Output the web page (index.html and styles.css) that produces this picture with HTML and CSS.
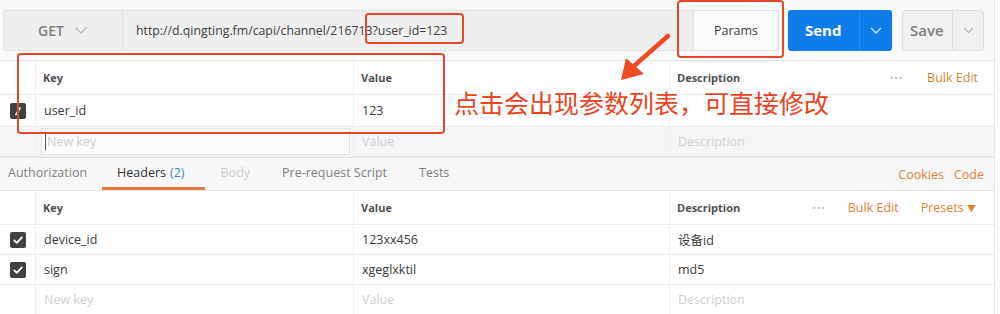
FILE: index.html
```html
<!DOCTYPE html>
<html lang="zh">
<head>
  <meta charset="UTF-8">
  <title>Params</title>
  <link rel="stylesheet" href="styles.css">
</head>
<body>

<div class="page">
  <div class="request">
    <div class="url-bar">
      <div class="method">GET
        <svg class="chev" width="14" height="8" viewBox="0 0 14 8"><path d="M1 1 L7 7 L13 1" fill="none" stroke="#b8b8b8" stroke-width="1.3"/></svg>
      </div>
      <div class="url">http://d.qingting.fm/capi/channel/216713?user_id=123</div>
      <div class="params-btn">Params</div>
    </div>
    <div class="send">
      <span class="send-label">Send</span>
      <span class="send-drop"><svg width="12" height="7" viewBox="0 0 12 7"><path d="M1 1 L6 6 L11 1" fill="none" stroke="#cfe4fb" stroke-width="1.3"/></svg></span>
    </div>
    <div class="save">
      <span class="save-label">Save</span>
      <span class="save-drop"><svg width="11" height="7" viewBox="0 0 11 7"><path d="M1 1 L5.5 5.5 L10 1" fill="none" stroke="#b0b0b0" stroke-width="1.1"/></svg></span>
    </div>
  </div>

  <div class="kv-table params">
    <div class="kv-row kv-head">
      <div class="cell check"></div>
      <div class="cell">Key</div>
      <div class="cell">Value</div>
      <div class="cell desc">Description
        <span class="actions"><span class="dots">•••</span><span class="link">Bulk Edit</span></span>
      </div>
    </div>
    <div class="kv-row">
      <div class="cell check"><span class="box"><svg width="16" height="16" viewBox="0 0 16 16"><path d="M6 11.5 L10 5" stroke="#fff" stroke-width="1.8" stroke-linecap="round"/></svg></span></div>
      <div class="cell">user_id</div>
      <div class="cell">123</div>
      <div class="cell"></div>
    </div>
    <div class="kv-row new-row">
      <div class="cell check"></div>
      <div class="cell"><div class="key-input"><span class="caret"></span>New key</div></div>
      <div class="cell muted">Value</div>
      <div class="cell muted">Description</div>
    </div>
  </div>

  <div class="tabs">
    <div class="tab first">Authorization</div>
    <div class="tab active">Headers <span class="count">(2)</span></div>
    <div class="tab disabled">Body</div>
    <div class="tab">Pre-request Script</div>
    <div class="tab">Tests</div>
    <div class="tab-links"><span class="link">Cookies</span><span class="link">Code</span></div>
  </div>

  <div class="kv-table headers">
    <div class="kv-row kv-head">
      <div class="cell check"></div>
      <div class="cell">Key</div>
      <div class="cell">Value</div>
      <div class="cell desc">Description
        <span class="actions"><span class="dots">•••</span><span class="link">Bulk Edit</span><span class="link">Presets <span class="tri">▼</span></span></span>
      </div>
    </div>
    <div class="kv-row">
      <div class="cell check"><span class="box"><svg width="16" height="16" viewBox="0 0 16 16"><path d="M4.2 8.3 L6.8 10.8 L11.8 5.4" fill="none" stroke="#fff" stroke-width="1.7" stroke-linecap="round" stroke-linejoin="round"/></svg></span></div>
      <div class="cell">device_id</div>
      <div class="cell">123xx456</div>
      <div class="cell">设备id</div>
    </div>
    <div class="kv-row">
      <div class="cell check"><span class="box"><svg width="16" height="16" viewBox="0 0 16 16"><path d="M4.2 8.3 L6.8 10.8 L11.8 5.4" fill="none" stroke="#fff" stroke-width="1.7" stroke-linecap="round" stroke-linejoin="round"/></svg></span></div>
      <div class="cell">sign</div>
      <div class="cell">xgeglxktil</div>
      <div class="cell">md5</div>
    </div>
    <div class="kv-row">
      <div class="cell check"></div>
      <div class="cell muted">New key</div>
      <div class="cell muted">Value</div>
      <div class="cell muted">Description</div>
    </div>
  </div>

  <!-- annotations -->
  <div class="mark mark-query"></div>
  <div class="mark mark-params"></div>
  <div class="mark mark-table"></div>
  <div class="note">点击会出现参数列表，可直接修改</div>
  <svg class="arrow" width="70" height="60" viewBox="610 30 70 60">
    <path d="M668 36 L634 66" stroke="#ef4a24" stroke-width="4.5" stroke-linecap="round"/>
    <path d="M621 80 L626 58 L644 74 Z" fill="#ef4a24"/>
  </svg>
</div>

</body>
</html>
```

FILE: styles.css
```css
* {
  box-sizing: border-box;
}
body {
  margin: 0;
  font-family: "Open Sans", "Noto Sans CJK SC", sans-serif;
  font-size: 12.5px;
  color: #3a3a3a;
  background: #fff;
}

.page {
  position: relative;
  width: 995px;
  height: 314px;
  border-right: 1px solid #e4e4e4;
  overflow: hidden;
}

/* request bar */
.request {
  display: flex;
  align-items: center;
  height: 61px;
  padding: 0 10px 0 3px;
  background: #fafafa;
  border-bottom: 1px solid #e2e2e2;
}

.url-bar {
  display: flex;
  width: 776px;
  height: 41px;
  background: #efefef;
  border: 1px solid #e2e2e2;
  border-radius: 3px;
}

.method {
  display: flex;
  align-items: center;
  gap: 10px;
  width: 119px;
  padding-left: 34px;
  font-size: 14px;
  font-weight: 600;
  color: #808080;
  border-right: 1px solid #e2e2e2;
}

.url {
  flex: 1;
  display: flex;
  align-items: center;
  padding-left: 13px;
  font-size: 12.3px;
  color: #404040;
}

.params-btn {
  display: flex;
  align-items: center;
  justify-content: center;
  width: 86px;
  margin: -1px -1px -1px 0;
  background: #fbfbfb;
  border: 1px solid #e2e2e2;
  color: #404040;
}

.send {
  display: flex;
  width: 104px;
  height: 41px;
  margin-left: 9px;
  background: #0f7de9;
  border-radius: 3px;
  color: #fff;
}
.send-label {
  flex: 1;
  display: flex;
  align-items: center;
  padding-left: 17px;
  font-size: 15px;
  font-weight: 700;
}
.send-drop {
  display: flex;
  align-items: center;
  justify-content: center;
  width: 33px;
  border-left: 1px solid #2b8cee;
}

.save {
  display: flex;
  width: 82px;
  height: 41px;
  margin-left: 10px;
  background: #f0f0f0;
  border: 1px solid #e0e0e0;
  border-radius: 3px;
  color: #7d7d7d;
}
.save-label {
  flex: 1;
  display: flex;
  align-items: center;
  padding-left: 7px;
  font-size: 15px;
  font-weight: 600;
}
.save-drop {
  display: flex;
  align-items: center;
  justify-content: center;
  width: 31px;
  border-left: 1px solid #e0e0e0;
}

/* key / value tables */
.kv-row {
  display: grid;
  grid-template-columns: 35px 318px 316px 1fr;
  height: 32px;
  border-bottom: 1px solid #ececec;
}
.params .kv-head {
  height: 34px;
}
.params .new-row {
  height: 30px;
}
.headers .kv-row {
  height: 30px;
}
.headers .kv-head {
  height: 34px;
}

.cell {
  display: flex;
  align-items: center;
  padding-left: 8px;
  border-left: 1px solid #f1f1f1;
  white-space: nowrap;
}
.cell.check {
  justify-content: center;
  padding-left: 0;
  border-left: none;
}

.kv-head .cell {
  font-size: 11px;
  font-weight: 700;
  color: #505050;
  padding-left: 7px;
}
.kv-head .cell.desc {
  justify-content: space-between;
  padding-right: 16px;
}
.actions {
  display: flex;
  align-items: center;
  gap: 24px;
  font-size: 12.5px;
  font-weight: 400;
}
.dots {
  font-size: 9px;
  letter-spacing: 1px;
  color: #b5b5b5;
}
.headers .actions {
  gap: 22px;
  padding-right: 2px;
}
.tri {
  font-size: 9px;
}

.link {
  color: #e27f37;
}

.box {
  display: flex;
  width: 16px;
  height: 16px;
  background: #414141;
  border-radius: 2px;
}

.new-row {
  background: #f6f6f6;
}
.key-input {
  display: flex;
  align-items: center;
  width: 309px;
  height: 27px;
  margin-left: -3px;
  padding-left: 3px;
  background: #fcfcfc;
  border: 1px solid #e2e2e2;
}
.caret {
  width: 1px;
  height: 16px;
  margin-right: 1px;
  background: #555;
}
.muted,
.key-input {
  color: #cfcfcf;
}

/* tabs */
.tabs {
  display: flex;
  align-items: stretch;
  height: 34px;
  background: #f8f8f8;
  border-top: 1px solid #e4e4e4;
  border-bottom: 1px solid #e4e4e4;
}
.tab {
  display: flex;
  align-items: center;
  padding: 0 16px;
  color: #808080;
  border-bottom: 3px solid transparent;
}
.tab.first {
  padding-left: 8px;
  padding-right: 15px;
}
.tab.active {
  padding: 0 20px 0 15px;
  color: #333;
  border-bottom-color: #e8773a;
}
.tab.disabled {
  color: #cccccc;
}
.count {
  margin-left: 4px;
  color: #3a87c8;
}
.tab-links {
  display: flex;
  align-items: center;
  gap: 10px;
  margin-left: auto;
  padding: 1px 10px 0 0;
}

/* annotations */
.mark {
  position: absolute;
  border: 2px solid #e6472b;
  border-radius: 4px;
}
.mark-query {
  left: 365px;
  top: 13px;
  width: 99px;
  height: 31px;
}
.mark-params {
  left: 677px;
  top: 0;
  width: 107px;
  height: 58px;
}
.mark-table {
  left: 17px;
  top: 53px;
  width: 428px;
  height: 81px;
}
.note {
  position: absolute;
  left: 454px;
  top: 86px;
  font-family: "Noto Sans CJK SC", sans-serif;
  font-size: 25px;
  line-height: 32px;
  color: #e8441e;
}
.arrow {
  position: absolute;
  left: 610px;
  top: 30px;
}
```
